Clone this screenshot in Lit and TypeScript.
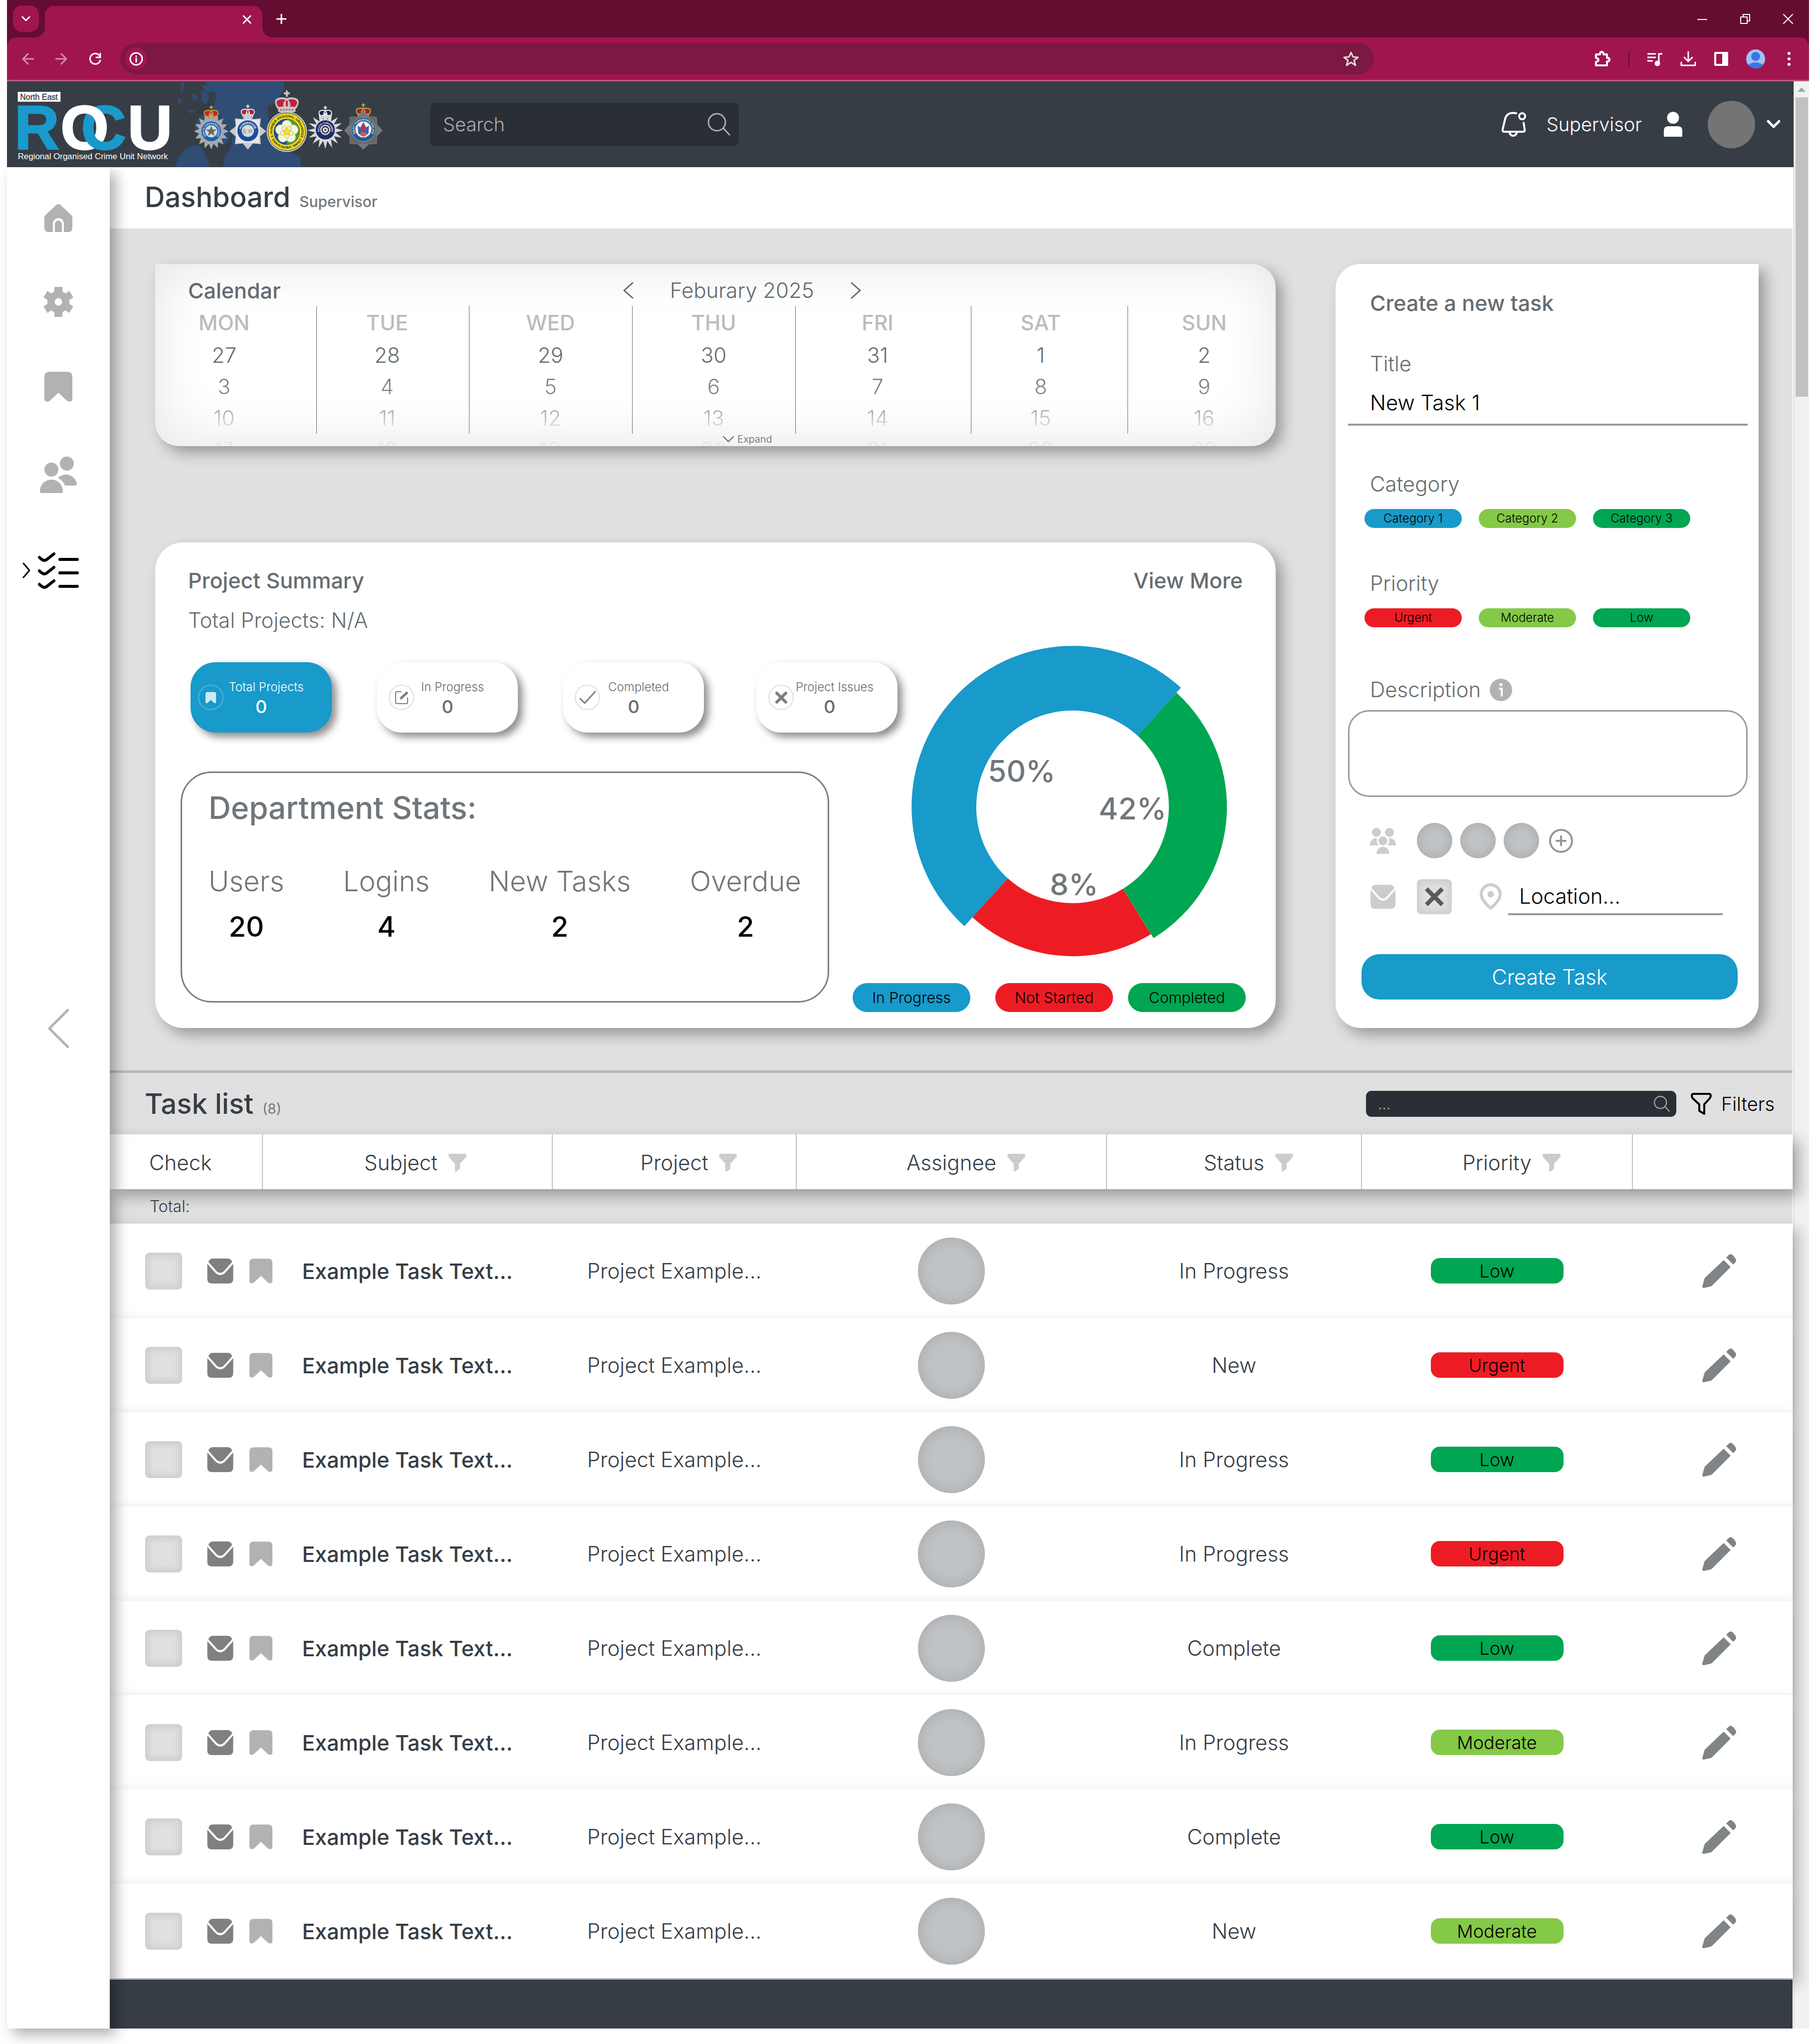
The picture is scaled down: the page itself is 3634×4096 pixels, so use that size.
import { LitElement, html, svg, css } from "lit";
import { customElement, property } from "lit/decorators.js";
import { classMap } from "lit/directives/class-map.js";

type Level = "Low" | "Moderate" | "Urgent";

interface Task {
  subject: string;
  project: string;
  status: string;
  priority: Level;
}

const TASKS: Task[] = (
  [
    ["In Progress", "Low"],
    ["New", "Urgent"],
    ["In Progress", "Low"],
    ["In Progress", "Urgent"],
    ["Complete", "Low"],
    ["In Progress", "Moderate"],
    ["Complete", "Low"],
    ["New", "Moderate"],
  ] as [string, Level][]
).map(([status, priority]) => ({
  subject: "Example Task Text...",
  project: "Project Example...",
  status,
  priority,
}));

const DAYS = ["MON", "TUE", "WED", "THU", "FRI", "SAT", "SUN"];
const WEEKS = [
  [27, 28, 29, 30, 31, 1, 2],
  [3, 4, 5, 6, 7, 8, 9],
  [10, 11, 12, 13, 14, 15, 16],
  [17, 18, 19, 20, 21, 22, 23],
];

const LEVEL_CLASS: Record<Level, string> = { Low: "green", Moderate: "lime", Urgent: "red" };

/* ---------- icons ---------- */

const stroke = (w: number, h: number, box: string, d: string, width: number, color = "currentColor") => html`
  <svg width=${w} height=${h} viewBox=${box} fill="none" stroke=${color} stroke-width=${width}
    stroke-linecap="round" stroke-linejoin="round" aria-hidden="true"><path d=${d} /></svg>`;

const fill = (w: number, h: number, box: string, d: string) => html`
  <svg width=${w} height=${h} viewBox=${box} fill="currentColor" fill-rule="evenodd" aria-hidden="true"><path d=${d} /></svg>`;

const iconSearch = (size: number) =>
  stroke(size, size, "0 0 48 48", "M20 3a17 17 0 1 0 0 34a17 17 0 1 0 0-34M33 32L45 45", 3);

const iconBookmark = (w: number, h: number) =>
  fill(w, h, "0 0 56 60", "M10 0H46Q56 0 56 10V54Q56 60 50 60Q47 60 44 57L28 42L12 57Q9 60 6 60Q0 60 0 54V10Q0 0 10 0Z");

const iconMail = (w: number, h: number) =>
  fill(
    w,
    h,
    "0 0 54 52",
    "M3 5Q6 0 12 0H42Q48 0 51 5Q52 7 51 8L34 27Q27 33 20 27L3 8Q2 7 3 5ZM0 11L17 30Q27 39 37 30L54 11V42Q54 52 44 52H10Q0 52 0 42Z"
  );

const iconHome = fill(
  56,
  56,
  "0 0 56 56",
  "M24 1.500Q28 -1.500 32 1.500L56 24V48Q56 56 48 56H39V39A11 11 0 0 0 17 39V56H8Q0 56 0 48V24ZM21 56V40A7 7 0 0 1 35 40V56Z"
);

const iconGear = fill(
  60,
  60,
  "0 0 60 60",
  "M22 0H38V9L44 13L52 8L60 21L52 26V34L60 39L52 52L44 47L38 51V60H22V51L16 47L8 52L0 39L8 34V26L0 21L8 8L16 13L22 9ZM30 22.500A7.500 7.500 0 1 0 30 37.500A7.500 7.500 0 1 0 30 22.500Z"
);

const iconPeople = html`
  <svg width="74" height="74" viewBox="0 0 74 74" fill="currentColor" aria-hidden="true">
    <circle cx="23" cy="26" r="14" /><circle cx="54" cy="14" r="14" />
    <path d="M0 70V69A23 23 0 0 1 46 69V70Q46 73 43 73H3Q0 73 0 70Z" />
    <path d="M36 43A22 22 0 0 1 74 55Q74 58 71 58H50Q46 47 36 43Z" />
  </svg>`;

const iconTasks = html`
  <svg width="82" height="88" viewBox="0 0 82 88" fill="none" stroke="#000" stroke-width="6"
    stroke-linecap="round" stroke-linejoin="round" aria-hidden="true">
    <path d="M3 18Q8 23 12 24Q16 24 18 22L32 11M3 45Q8 50 12 51Q16 51 18 49L32 38M3 72Q8 77 12 78Q16 78 18 76L32 65" />
    <path d="M44 22H79M44 49H79M44 76H79" />
  </svg>`;

const iconFunnel = fill(
  36,
  36,
  "0 0 36 36",
  "M3 0H33Q36 0 36 3Q36 6 34 8L23 20V29Q23 30 22 31L15 36Q13 36 13 34V20L2 8Q0 6 0 3Q0 0 3 0Z"
);

const iconPencil = fill(
  68,
  68,
  "0 0 68 68",
  "M48 7L53 2Q57 -2 62 3L66 8Q70 13 66 17L62 21ZM43 12L57 26L20 63Q19 64 17 65L3 68Q0 68 0 65L4 51Q4 50 5 48Z"
);

const iconGroup = html`
  <svg width="52" height="52" viewBox="0 0 52 52" fill="currentColor" aria-hidden="true">
    <circle cx="13" cy="9" r="9" /><circle cx="39" cy="9" r="9" /><circle cx="26" cy="26" r="9" />
    <path d="M0 35A14 14 0 0 1 14 20Q12 29 17 35ZM52 35A14 14 0 0 0 38 20Q40 29 35 35Z" />
    <path d="M13 52A13 14 0 0 1 39 52Z" />
  </svg>`;

const iconPin = html`
  <svg width="44" height="54" viewBox="0 0 44 54" fill="none" stroke="currentColor" stroke-width="6" aria-hidden="true">
    <path d="M22 3A19 19 0 0 1 41 22Q41 34 22 50Q3 34 3 22A19 19 0 0 1 22 3Z" stroke-linejoin="round" />
    <circle cx="22" cy="22" r="6.500" fill="currentColor" stroke="none" />
  </svg>`;

/* ---------- crests ---------- */

const burst = (cx: number, cy: number, outer: number, inner: number, n: number, stretch = 1) =>
  Array.from({ length: n * 2 }, (_, i) => {
    const a = (Math.PI * i) / n - Math.PI / 2;
    const r = i % 2 ? inner : outer;
    return `${(cx + r * Math.cos(a)).toFixed(1)},${(cy + r * stretch * Math.sin(a)).toFixed(1)}`;
  }).join(" ");

const crown = (cx: number, top: number, scale: number, metal: string, velvet: string) => svg`
  <g transform="translate(${cx} ${top}) scale(${scale})">
    <path d="M-2 0H2V4H6V8H2V13H-2V8H-6V4H-2Z" fill=${metal} />
    <path d="M-19 38Q-29 24 -21 17Q-12 12 0 16Q12 12 21 17Q29 24 19 38Z" fill=${metal} />
    <path d="M-17 34Q-25 24 -18 20Q-10 16 -3 20Q-9 26 -7 33ZM17 34Q25 24 18 20Q10 16 3 20Q9 26 7 33Z" fill=${velvet} />
    <path d="M-2 21H2V33H-2Z" fill=${velvet} />
    <path d="M-18 36H18V44Q0 48 -18 44Z" fill=${metal} />
    <path d="M-14 40H14" stroke=${velvet} stroke-width="2" stroke-dasharray="3 3" />
  </g>`;

@customElement("rocu-logo")
export class RocuLogo extends LitElement {
  static styles = css`
    :host { display: block; flex: none; }
    svg { display: block; font-family: "Liberation Sans", Arial, sans-serif; }
    .letter { font-size: 132px; font-weight: 700; }
    .ring { font-weight: 700; }
  `;

  private ringText(id: string, cx: number, cy: number, r: number, size: number, color: string, text: string) {
    return svg`
      <path id=${id} fill="none" d="M${cx} ${cy + r}A${r} ${r} 0 1 1 ${cx + 0.1} ${cy + r}" />
      <text class="ring" font-size=${size} fill=${color} text-anchor="middle">
        <textPath href="#${id}" startOffset="50%">${text}</textPath>
      </text>`;
  }

  render() {
    return html`
      <svg width="767" height="172" viewBox="15 174 815 182" role="img" aria-label="North East ROCU">
        <clipPath id="lower"><rect x="150" y="272" width="200" height="60" /></clipPath>
        <g fill="#2f4d75">
          <path d="M436 174H606L604 192L588 218L570 228L573 262L585 300L612 322L640 334L641 356H475L479 334L492 314L496 290L482 262L462 240L456 222L462 202L448 188Z" />
          <path d="M373 356L378 340L392 320L412 308L428 312L440 334L447 356Z" />
          <path d="M414 270L424 250L446 240L474 252L492 290L480 310L458 304L446 292L430 298L420 284Z" />
          <path d="M386 176L393 174L390 190L384 196ZM378 212L384 208L388 218L380 222ZM408 204L416 200L422 210L414 216ZM428 196L438 192L446 204L440 222L430 218ZM428 182L444 180L456 196L444 198ZM404 234L416 236L410 242L402 240ZM456 222L474 218L466 234L448 244Z" />
        </g>
        <rect x="38" y="196" width="91" height="21" fill="#fff" />
        <text x="83" y="213" font-size="17" text-anchor="middle" fill="#363d45" stroke="#363d45" stroke-width="0.400">North East</text>
        <g stroke-width="3">
          <text class="letter" x="31" y="318" fill="#189acb" stroke="#189acb">R</text>
          <text class="letter" x="173" y="318" fill="#189acb" stroke="#189acb">C</text>
          <text class="letter" x="129" y="318" fill="#fff" stroke="#fff">O</text>
          <text class="letter" x="173" y="318" fill="#189acb" stroke="#189acb" clip-path="url(#lower)">C</text>
          <text class="letter" x="272" y="318" fill="#fff" stroke="#fff">U</text>
        </g>
        <text x="38" y="339" font-size="18" fill="#fff">Regional Organised Crime Unit Network</text>

        ${crown(450, 225, 0.65, "#c79a2c", "#c8202c")}
        <polygon points=${burst(450, 280, 37, 26, 16, 1.05)} fill="#a7a9ac" />
        <circle cx="450" cy="280" r="21" fill="#1c63ae" /><circle cx="450" cy="280" r="13" fill="#d5d8d6" />
        <polygon points=${burst(450, 280, 12, 5, 5)} fill="#5f6d66" />
        ${this.ringText("r1", 450, 280, 15, 5, "#dfe9f5", "NORTH YORKSHIRE POLICE")}

        ${crown(528, 223, 0.62, "#d8dadc", "#b32035")}
        <polygon points=${burst(528, 280, 39, 28, 8)} fill="#c9cbcd" />
        <rect x="503" y="255" width="50" height="50" fill="#e4e5e6" />
        <circle cx="528" cy="279" r="23" fill="#1d4c9f" stroke="#fff" /><circle cx="528" cy="279" r="13" fill="#d9dadb" />
        <text x="528" y="284" font-size="12" text-anchor="middle" fill="#76797c">E R</text>
        ${this.ringText("r2", 528, 279, 15, 6, "#fff", "· HUMBERSIDE ·")}

        ${crown(611, 193, 1.03, "#c3c5c7", "#c81f3a")}
        <circle cx="611" cy="281" r="43" fill="#c9cbcd" /><circle cx="611" cy="281" r="40" fill="#f6df1d" stroke="#222" />
        <circle cx="611" cy="281" r="28" fill="#1f4f9b" /><path d="M611 253A28 28 0 0 1 611 309Z" fill="#4f9a35" />
        ${[0, 72, 144, 216, 288].map(
          (a) => svg`<circle cx="611" cy="267" r="10.500" fill="#f7f6de" stroke="#d7cf7d" transform="rotate(${a} 611 281)" />`
        )}
        ${[36, 108, 180, 252, 324].map(
          (a) => svg`<circle cx="611" cy="272" r="5" fill="#f2efb4" stroke="#b9bd5c" transform="rotate(${a} 611 281)" />`
        )}
        <circle cx="611" cy="281" r="6" fill="#f3e22a" stroke="#cda927" />
        ${this.ringText("r3", 611, 281, 31, 7, "#1a1a1a", "YORKSHIRE & HUMBER REGIONAL ORGANISED CRIME UNIT")}

        ${crown(693, 226, 0.58, "#f3f3f3", "#1d2440")}
        <polygon points=${burst(693, 278, 38, 22, 16, 1.05)} fill="#d8dadc" />
        <circle cx="693" cy="277" r="21" fill="#232a6b" stroke="#eee" /><circle cx="693" cy="277" r="11" fill="#d8dadc" />
        <circle cx="693" cy="277" r="7" fill="none" stroke="#333" stroke-width="2.500" /><circle cx="693" cy="277" r="2" fill="#333" />
        ${this.ringText("r4", 693, 277, 13, 5, "#fff", "SOUTH YORKSHIRE")}

        ${crown(774, 220, 0.66, "#b9a046", "#8f2738")}
        <polygon points=${burst(774, 278, 41, 32, 8)} fill="#77777a" />
        <rect x="746" y="250" width="56" height="56" fill="#66676b" />
        <circle cx="774" cy="276" r="26" fill="#235a99" stroke="#c8b15e" /><circle cx="774" cy="276" r="17" fill="#f1f1f1" />
        <path d="M762 268L768 272L774 260L780 272L786 268L785 284L778 290H770L763 284Z" fill="#4b5ca4" />
        <path d="M768 282H780V288L774 292L768 288Z" fill="#e2572e" /><circle cx="774" cy="272" r="5" fill="#c8324a" />
        ${this.ringText("r5", 774, 276, 19, 6, "#e9e2c4", "WEST YORKSHIRE POLICE")}
      </svg>`;
  }
}

@customElement("status-donut")
export class StatusDonut extends LitElement {
  static styles = css`
    :host { display: block; }
    svg { display: block; }
    text { font: 500 60px Inter, "Liberation Sans", sans-serif; fill: #70767a; text-anchor: middle; }
  `;
  render() {
    return html`
      <svg width="646" height="646" viewBox="-323 -323 646 646" role="img" aria-label="Project status share">
        <path fill="#ed1c24" d="M157 255A299 299 0 0 1 -201 221L-130 143A193 193 0 0 0 101 164Z" />
        <path fill="#00a651" d="M208 -229A309 309 0 0 1 162 263L101 164A193 193 0 0 0 130 -143Z" />
        <path fill="#189acb" d="M-217 239A320 320 0 0 1 217 -239L130 -143A190 190 0 0 0 -130 143Z" />
        <text x="-102" y="-50">50%</text>
        <text x="120" y="25">42%</text>
        <text x="3" y="177">8%</text>
      </svg>`;
  }
}

@customElement("browser-bar")
export class BrowserBar extends LitElement {
  static styles = css`
    :host { display: block; background: #650d31; color: #fff; }
    svg { display: block; }
    button { border: 0; padding: 0; background: none; color: inherit; display: grid; place-items: center; }
    .tabs { display: flex; align-items: center; height: 75px; }
    .menu { width: 52px; height: 53px; margin-left: 12px; border-radius: 18px; background: #a0154e; }
    .tab { position: relative; display: flex; justify-content: flex-end; align-items: center; align-self: flex-end; width: 436px; height: 63px; box-sizing: border-box; padding: 0 22px 10px 0; margin-left: 12px; border-radius: 18px 18px 0 0; background: #a0154e; }
    .tab::before, .tab::after { content: ""; position: absolute; bottom: 0; width: 20px; height: 20px; }
    .tab::before { left: -20px; background: radial-gradient(circle at 0 0, transparent 20px, #a0154e 20px); }
    .tab::after { right: -20px; background: radial-gradient(circle at 100% 0, transparent 20px, #a0154e 20px); }
    .plus { margin-left: 28px; }
    .win { margin-left: auto; display: flex; gap: 66px; padding-right: 32px; }
    .bar { display: flex; align-items: center; height: 88px; box-sizing: border-box; background: #a0154e; border-bottom: 3px solid #bd5780; border-radius: 18px 18px 0 0; padding: 0 36px 0 30px; }
    .nav { display: flex; gap: 43px; align-items: center; }
    .dim { color: #d48dab; }
    .url { flex: 1; display: flex; align-items: center; justify-content: space-between; height: 63px; box-sizing: border-box; margin: 0 441px 0 37px; padding: 0 30px 0 9px; border-radius: 32px; background: #7c1842; }
    .site { width: 45px; height: 45px; border-radius: 50%; background: #a0154e; }
    .tools { display: flex; align-items: center; gap: 35px; }
    .tools .more { margin-left: 9px; }
    .sep { width: 2px; height: 30px; background: #5c1033; }
  `;
  render() {
    return html`
      <div class="tabs">
        <button class="menu" aria-label="Search tabs">${stroke(18, 12, "0 0 18 12", "M2 2L9 9L16 2", 3)}</button>
        <div class="tab"><button aria-label="Close tab">${stroke(18, 18, "0 0 18 18", "M2 2L16 16M16 2L2 16", 3)}</button></div>
        <button class="plus" aria-label="New tab">${stroke(20, 20, "0 0 20 20", "M10 1V19M1 10H19", 3)}</button>
        <div class="win">
          <button aria-label="Minimise">${stroke(20, 20, "0 0 20 20", "M1 11H19", 2)}</button>
          <button aria-label="Restore">${stroke(20, 20, "0 0 20 20", "M1 6H14V19H1ZM6 5V1H19V14H15", 2)}</button>
          <button aria-label="Close">${stroke(20, 20, "0 0 20 20", "M1 1L19 19M19 1L1 19", 2)}</button>
        </div>
      </div>
      <div class="bar">
        <div class="nav">
          <button class="dim" aria-label="Back">${stroke(24, 24, "0 0 24 24", "M23 12H2M12 2L2 12L12 22", 3)}</button>
          <button class="dim" aria-label="Forward">${stroke(24, 24, "0 0 24 24", "M1 12H22M12 2L22 12L12 22", 3)}</button>
          <button aria-label="Reload">${stroke(26, 26, "0 0 26 26", "M23 16A10.500 10.500 0 1 1 21 6L23 9M23 2V10H15", 3)}</button>
        </div>
        <div class="url">
          <button class="site" aria-label="Site information">${stroke(28, 28, "0 0 28 28", "M14 2a12 12 0 1 0 0 24a12 12 0 1 0 0-24M14 13V20M14 8.500V9", 3)}</button>
          <button aria-label="Bookmark this tab">${stroke(32, 32, "0 0 32 32", "M16 3L20 12L30 13L22 19L25 29L16 23L7 29L10 19L2 13L12 12Z", 3, "#d9dfd6")}</button>
        </div>
        <div class="tools">
          <button aria-label="Extensions">${stroke(34, 34, "0 0 34 34", "M4 8H12V7Q12 3 15.500 3Q19 3 19 7V8H26V15H27Q31 15 31 18.500Q31 22 27 22H26V30H4V23Q9 22 9 19Q9 16 4 15Z", 4)}</button>
          <span class="sep"></span>
          <button aria-label="Media">
            <svg width="32" height="32" viewBox="0 0 32 32" fill="none" stroke="currentColor" stroke-width="3"><path d="M1 6H18M1 13H18M1 20H12M24 25V6H31" /><circle cx="21" cy="25" r="4" fill="currentColor" /></svg>
          </button>
          <button aria-label="Downloads">${stroke(32, 32, "0 0 32 32", "M16 2V20M8 13L16 21L24 13M2 23V29H30V23", 3)}</button>
          <button aria-label="Side panel">
            <svg width="30" height="30" viewBox="0 0 30 30" fill="currentColor"><path fill-rule="evenodd" d="M3 1H27Q29 1 29 3V27Q29 29 27 29H3Q1 29 1 27V3Q1 1 3 1ZM5 5V25H17V5Z" /></svg>
          </button>
          <button aria-label="Profile">
            <svg width="38" height="38" viewBox="0 0 38 38"><clipPath id="c"><circle cx="19" cy="19" r="19" /></clipPath><g clip-path="url(#c)"><rect width="38" height="38" fill="#9cc2fb" /><circle cx="19" cy="14" r="9" fill="#3f73e0" /><ellipse cx="19" cy="35" rx="16" ry="9" fill="#3b78e7" /></g></svg>
          </button>
          <button class="more" aria-label="Menu">
            <svg width="8" height="30" viewBox="0 0 8 30" fill="currentColor"><circle cx="4" cy="4" r="3" /><circle cx="4" cy="15" r="3" /><circle cx="4" cy="26" r="3" /></svg>
          </button>
        </div>
      </div>`;
  }
}

@customElement("stat-card")
export class StatCard extends LitElement {
  @property() label = "";
  @property({ type: Number }) value = 0;
  @property() icon = "bookmark";
  @property({ type: Boolean }) active = false;

  static styles = css`
    :host { display: block; flex: none; width: 283px; }
    .card { display: flex; align-items: center; gap: 4px; box-sizing: border-box; width: 100%; height: 141px; padding: 0 58px 0 24px; border: 0; border-radius: 50px; background: #fff; color: #666d71; box-shadow: 9px 9px 16px rgba(0, 0, 0, 0.45); font: 300 24px/30px Inter, "Liberation Sans", sans-serif; }
    .active { background: #189acb; color: #fff; padding-left: 15px; padding-right: 50px; }
    .disc { flex: none; display: grid; place-items: center; box-sizing: border-box; width: 51px; height: 51px; border: 2px solid #dcdfe0; border-radius: 50%; color: #7b7f82; }
    .active .disc { border-color: #53b5da; color: #cfeaf5; }
    .text { flex: 1; display: flex; flex-direction: column; align-items: center; white-space: nowrap; padding-top: 6px; }
    .num { font-weight: 500; font-size: 36px; line-height: 48px; padding-right: 20px; }
    svg { display: block; }
  `;

  private glyph() {
    switch (this.icon) {
      case "edit":
        return html`<svg width="30" height="30" viewBox="0 0 30 30" fill="none" stroke="currentColor" stroke-width="2" stroke-linecap="round"><path d="M14 3H6Q3 3 3 6V24Q3 27 6 27H24Q27 27 27 24V15" /><path d="M12 18L13 14L25 3L28 6L16 17Z" fill="currentColor" stroke-width="1" /></svg>`;
      case "check":
        return stroke(34, 30, "0 0 34 30", "M2 17L11 26L32 3", 3);
      case "cross":
        return stroke(26, 26, "0 0 26 26", "M4 4L22 22M22 4L4 22", 6);
      default:
        return iconBookmark(21, 24);
    }
  }

  render() {
    return html`
      <button class=${classMap({ card: true, active: this.active })}>
        <span class="disc">${this.glyph()}</span>
        <span class="text"><span>${this.label}</span><span class="num">${this.value}</span></span>
      </button>`;
  }
}

@customElement("app-root")
export class AppRoot extends LitElement {
  static styles = css`
    :host { display: block; background: #fff; color: #363d45; font: 300 42px/50px Inter, "Liberation Sans", sans-serif; }
    svg { display: block; flex: none; }
    button { display: grid; place-items: center; padding: 0; border: 0; background: none; color: inherit; font: inherit; }
    input, textarea { font: inherit; box-sizing: border-box; border-radius: 0; outline: 0; resize: none; min-width: 0; }
    h1, h2, h3, p, dl, dd, dt { margin: 0; font-size: inherit; font-weight: inherit; }
    table { border-collapse: collapse; border-spacing: 0; table-layout: fixed; width: 100%; }
    th, td { padding: 0; font-weight: inherit; }

    .window { margin: 0 8px 31px 14px; }
    .view { display: grid; grid-template-columns: 1fr 31px; }
    .app { min-width: 0; position: relative; z-index: 1; }

    .top { display: flex; align-items: center; height: 172px; background: #363d45; color: #fff; position: relative; z-index: 3; }
    .find { display: flex; align-items: center; box-sizing: border-box; background: #2a2e35; color: #a9acaf; }
    .find input { flex: 1; border: 0; padding: 0; background: none; color: inherit; }
    .find input::placeholder { color: inherit; opacity: 1; }
    .find.main { width: 619px; height: 87px; margin-left: 81px; padding: 0 16px 0 26px; border-radius: 11px; font-size: 38px; }
    .user { display: flex; align-items: center; margin-left: auto; padding-right: 26px; font-size: 38px; }
    .user .name { margin: 0 44px 0 41px; }
    .face { width: 95px; height: 95px; margin: 0 23px 0 51px; border-radius: 50%; background: #747474; }

    .cols { display: grid; grid-template-columns: 206px 1fr; }
    .side { position: relative; z-index: 2; display: flex; flex-direction: column; align-items: center; gap: 110px; padding-top: 74px; background: #fff; color: #b2b2b2; box-shadow: 12px 12px 26px rgba(0, 0, 0, 0.32); }
    .side .current { position: relative; }
    .side .mark { position: absolute; right: 97px; }
    .side .collapse { margin-top: 725px; }
    .main-col { min-width: 0; padding-right: 2px; }

    .title { display: flex; align-items: baseline; gap: 18px; height: 123px; box-sizing: border-box; padding: 25px 0 0 70px; }
    .title h1, .task-bar h2 { font-size: 56px; line-height: 70px; font-weight: 500; }
    .title span, .task-bar .count { font-size: 30px; font-weight: 500; color: #75797c; }

    .grey { background: #e0e0e0; }
    .board { display: grid; grid-template-columns: minmax(0, 2246fr) minmax(0, 848fr); column-gap: 120px; padding: 71px 68px 85px 91px; color: #666d71; }
    .left { display: flex; flex-direction: column; gap: 193px; min-width: 0; }
    .card { box-shadow: 13px 13px 28px rgba(0, 0, 0, 0.32); background: #fff; }
    .strong { font-weight: 500; font-size: 43px; }

    .calendar { position: relative; height: 365px; border-radius: 0 48px 48px 48px; overflow: hidden; }
    .calendar::after { content: ""; position: absolute; inset: 0; border-radius: inherit; box-shadow: inset 0 0 110px rgba(0, 0, 0, 0.11); pointer-events: none; }
    .cal-head { display: grid; grid-template-columns: 5fr 7fr; align-items: center; height: 84px; box-sizing: border-box; padding-top: 22px; }
    .cal-head h2 { padding-left: 66px; }
    .month { display: flex; align-items: center; gap: 72px; }
    .calendar th, .calendar td { text-align: center; border-left: 1px solid #666d71; }
    .calendar tr > :first-child { border-left: 0; padding-right: 46px; }
    .calendar tr > :nth-child(2), .calendar tr > :nth-child(5) { padding-right: 22px; }
    .calendar tr > :nth-child(6) { padding-right: 34px; }
    .calendar tr > :last-child { padding-left: 10px; }
    .calendar th { height: 67px; font-weight: 500; color: #b9bcbd; }
    .calendar td { height: 63px; }
    .w1 span { color: transparent; background: linear-gradient(#6b7276, #8e9396); background-clip: text; }
    .w2 span { color: transparent; background: linear-gradient(#a9acae 20%, #e4e5e5 85%); background-clip: text; }
    .calendar .w3 td { border-color: transparent; color: #f3f3f3; }
    .expand { position: absolute; left: calc(50% + 14px); bottom: 2px; display: flex; align-items: center; gap: 6px; font-size: 20px; line-height: 24px; }
    .k1 { width: 323px; } .k2 { width: 306px; } .k3 { width: 327px; } .k5 { width: 352px; } .k6 { width: 314px; } .k7 { width: 297px; }

    .summary { box-sizing: border-box; padding: 51px 59px 32px 51px; border-radius: 56px; }
    .sum-head { display: flex; justify-content: space-between; padding: 0 7px 30px 15px; }
    .sum-body { display: grid; grid-template-columns: minmax(0, 1fr) 789px; column-gap: 47px; }
    .sum-left { min-width: 0; }
    .total { padding-left: 15px; }
    .stats { display: flex; gap: 90px; margin: 59px 0 78px 20px; }
    .stats .issues { margin-left: 15px; }
    .dept { height: 463px; box-sizing: border-box; padding: 35px 53px; border: 3px solid #777c80; border-radius: 62px; color: #70767a; }
    .dept h3 { font-size: 62px; line-height: 70px; font-weight: 500; }
    .dept dl { display: flex; justify-content: space-between; padding-top: 77px; font-size: 56px; line-height: 70px; text-align: center; }
    .dept dd { padding-top: 21px; color: #000; font-weight: 500; }
    .chart { padding-top: 76px; }
    .chart status-donut { margin-left: 118px; }
    .legend { display: flex; gap: 50px; padding-top: 30px; }
    .legend .pill:last-child { margin-left: -20px; }
    .pill { display: grid; place-items: center; color: #000; white-space: nowrap; }
    .legend .pill { width: 236px; height: 58px; border-radius: 29px; font-size: 30px; line-height: 36px; }
    .blue { background: #189acb; } .red { background: #ed1c24; } .green { background: #00a651; } .lime { background: #84c947; }

    .create { display: flex; flex-direction: column; box-sizing: border-box; padding: 53px 22px 57px 25px; border-radius: 50px 0 50px 50px; }
    .create h2, .create .lab { padding-left: 44px; }
    .create .lab { display: flex; align-items: center; gap: 18px; }
    .field-title { margin-top: 72px; }
    .text-in { width: 100%; height: 89px; margin-top: 10px; padding: 0 44px; border: 0; border-bottom: 4px solid #979b9f; background: none; color: #000; }
    .cat { margin-top: 92px; } .pri { margin-top: 86px; } .desc { margin-top: 100px; }
    .choices { display: flex; gap: 34px; padding: 25px 0 0 33px; }
    .choices .pill { width: 195px; height: 38px; border-radius: 19px; font-size: 24px; line-height: 28px; }
    .area { display: block; width: 100%; height: 174px; margin-top: 16px; padding: 20px 40px; border: 3px solid #979b9f; border-radius: 42px; background: none; }
    .who, .where { display: flex; align-items: center; color: #ccc; }
    .who { margin: 52px 0 40px; padding-left: 44px; }
    .who .av { width: 71px; height: 71px; margin-right: 16px; border-radius: 50%; }
    .who .av:first-of-type { margin-left: 42px; }
    .av { background: #bfc3c6; box-shadow: inset 0 0 16px 6px #b0b0b0; }
    .plus { margin-left: 4px; color: #969696; }
    .where { padding-left: 44px; }
    .where .loc { flex: 1; height: 74px; margin: 0 50px 0 13px; padding: 0 0 0 22px; border: 0; border-bottom: 4px solid #979b9f; background: none; color: #000; }
    .where .loc::placeholder { color: #000; opacity: 1; }
    .tick { flex: none; appearance: none; width: 74px; height: 74px; margin: 0; border-radius: 9px; background: #e0e0e0; box-shadow: inset 0 0 12px 8px #cfcfcf; display: grid; place-items: center; }
    .where .tick { width: 70px; height: 70px; margin: 0 56px 0 42px; }
    .tick:checked::before { content: ""; width: 38px; height: 38px; background: #5a5a5a; clip-path: polygon(0 16%, 16% 0, 50% 34%, 84% 0, 100% 16%, 66% 50%, 100% 84%, 84% 100%, 50% 66%, 16% 100%, 0 84%, 34% 50%); }
    .submit { height: 91px; margin: 78px 20px 0 27px; border-radius: 36px; background: #189acb; color: #fff; }

    .task-bar { display: flex; align-items: center; height: 128px; box-sizing: border-box; padding: 0 36px 0 70px; border-top: 5px solid #b8baba; }
    .heading { display: flex; align-items: baseline; gap: 18px; }
    .task-bar .count { font-weight: 400; font-size: 28px; }
    .find.small { width: 622px; height: 52px; margin: 0 28px 0 auto; padding: 0 12px 0 24px; border-radius: 11px; font-size: 30px; }
    .filters { display: flex; align-items: center; gap: 18px; color: #000; font-size: 38px; }

    .tasks tr { background: #fff; box-shadow: 12px 12px 26px rgba(0, 0, 0, 0.25); }
    .tasks thead tr { height: 110px; box-shadow: 13px 13px 28px rgba(0, 0, 0, 0.32); }
    .tasks thead th { border-right: 2px solid #bfc2c4; }
    .tasks thead th:last-child { border: 0; }
    .tasks .sum { background: none; box-shadow: none; font-size: 32px; }
    .tasks .sum td { height: 69px; padding-left: 80px; }
    .tasks .row td { height: 189px; text-align: center; }
    .c1 { width: 306px; } .c2 { width: 581px; } .c3 { width: 489px; } .c4 { width: 622px; } .c5 { width: 511px; } .c6 { width: 543px; } .c7 { width: 321px; }
    .th { display: flex; justify-content: center; align-items: center; gap: 22px; padding: 4px 0 0 58px; }
    .th button { color: #ccc; }
    .th.first { justify-content: flex-start; padding-left: 79px; }
    .th.subject { padding-left: 32px; }
    .marks { display: flex; align-items: center; padding-left: 71px; color: #b2b2b2; }
    .marks .mail { margin: 0 32px 0 50px; color: #808080; }
    .tasks .av { width: 134px; height: 134px; margin: 0 auto; border-radius: 50%; box-shadow: inset 0 0 22px 7px #b0b0b0; }
    .tasks .pill { width: 266px; height: 51px; margin: 0 auto; border-radius: 18px; font-size: 36px; line-height: 40px; }
    .edit { margin: 0 auto; padding-left: 26px; color: #7f8487; }
    .foot { height: 98px; margin-top: 3px; background: #363d45; }

    .scroll { display: flex; flex-direction: column; align-items: center; box-sizing: border-box; border-left: 1px solid #c4c4c4; background: #f1f1f1; }
    .scroll .up { height: 32px; color: #a3a3a3; }
    .thumb { width: 25px; height: 600px; background: #c1c1c1; }
  `;

  private funnelHead(text: string, extra = "") {
    return html`<th><div class="th ${extra}">${text}<button aria-label="Filter ${text}">${iconFunnel}</button></div></th>`;
  }

  private header() {
    return html`
      <header class="top">
        <rocu-logo></rocu-logo>
        <label class="find main"><input type="search" placeholder="Search" aria-label="Search" />${iconSearch(48)}</label>
        <div class="user">
          <button aria-label="Notifications">
            <svg width="50" height="50" viewBox="0 0 50 50" fill="none" stroke="currentColor" stroke-width="4" stroke-linecap="round" stroke-linejoin="round">
              <path d="M30 3Q10 -1 7 18L3 35Q2 40 6 40H44Q48 40 47 35L45 22" /><path d="M16 40Q18 48 24 48Q30 48 32 40" /><circle cx="42" cy="9" r="6" />
            </svg>
          </button>
          <span class="name">Supervisor</span>
          <svg width="37" height="50" viewBox="0 0 37 50" fill="currentColor"><circle cx="18.500" cy="12" r="12" /><path d="M0 50V38Q0 29 9 29H28Q37 29 37 38V50Z" /></svg>
          <span class="face"></span>
          <button aria-label="Account menu">${stroke(28, 18, "0 0 28 18", "M3 3L14 14L25 3", 5)}</button>
        </div>
      </header>`;
  }

  private sidebar() {
    return html`
      <nav class="side">
        <button aria-label="Home">${iconHome}</button>
        <button aria-label="Settings">${iconGear}</button>
        <button aria-label="Saved">${iconBookmark(56, 60)}</button>
        <button aria-label="Teams">${iconPeople}</button>
        <button class="current" aria-label="Tasks"><span class="mark">${stroke(16, 32, "0 0 16 32", "M2 2L14 16L2 30", 3, "#000")}</span>${iconTasks}</button>
        <button class="collapse" aria-label="Collapse">${stroke(42, 78, "0 0 42 78", "M40 2L3 39L40 76", 5)}</button>
      </nav>`;
  }

  private calendar() {
    return html`
      <section class="card calendar">
        <div class="cal-head">
          <h2 class="strong">Calendar</h2>
          <div class="month">
            <button aria-label="Previous month">${stroke(24, 34, "0 0 24 34", "M21 2L4 17L21 32", 3)}</button>
            <span>Feburary 2025</span>
            <button aria-label="Next month">${stroke(24, 34, "0 0 24 34", "M3 2L20 17L3 32", 3)}</button>
          </div>
        </div>
        <table>
          <colgroup><col class="k1" /><col class="k2" /><col class="k3" /><col class="k3" /><col class="k5" /><col class="k6" /><col class="k7" /></colgroup>
          <thead><tr>${DAYS.map((d) => html`<th scope="col">${d}</th>`)}</tr></thead>
          <tbody>${WEEKS.map((w, i) => html`<tr class="w${i}">${w.map((d) => html`<td><span>${d}</span></td>`)}</tr>`)}</tbody>
        </table>
        <button class="expand">${stroke(24, 12, "0 0 24 12", "M2 1L12 11L22 1", 2)}Expand</button>
      </section>`;
  }

  private summary() {
    return html`
      <section class="card summary">
        <div class="sum-head strong"><h2 class="strong">Project Summary</h2><button>View More</button></div>
        <div class="sum-body">
          <div class="sum-left">
            <p class="total">Total Projects: N/A</p>
            <div class="stats">
              <stat-card label="Total Projects" icon="bookmark" active></stat-card>
              <stat-card label="In Progress" icon="edit"></stat-card>
              <stat-card label="Completed" icon="check"></stat-card>
              <stat-card class="issues" label="Project Issues" icon="cross"></stat-card>
            </div>
            <div class="dept">
              <h3>Department Stats:</h3>
              <dl>
                ${[["Users", 20], ["Logins", 4], ["New Tasks", 2], ["Overdue", 2]].map(
                  ([k, v]) => html`<div><dt>${k}</dt><dd>${v}</dd></div>`
                )}
              </dl>
            </div>
          </div>
          <div class="chart">
            <status-donut></status-donut>
            <div class="legend">
              <span class="pill blue">In Progress</span><span class="pill red">Not Started</span><span class="pill green">Completed</span>
            </div>
          </div>
        </div>
      </section>`;
  }

  private createForm() {
    return html`
      <section class="card create">
        <h2 class="strong">Create a new task</h2>
        <label class="lab field-title" for="title">Title</label>
        <input class="text-in" id="title" type="text" value="New Task 1" />
        <h3 class="lab cat">Category</h3>
        <div class="choices">
          <button class="pill blue">Category 1</button><button class="pill lime">Category 2</button><button class="pill green">Category 3</button>
        </div>
        <h3 class="lab pri">Priority</h3>
        <div class="choices">
          <button class="pill red">Urgent</button><button class="pill lime">Moderate</button><button class="pill green">Low</button>
        </div>
        <label class="lab desc" for="desc">Description
          <svg width="45" height="45" viewBox="0 0 45 45"><circle cx="22.500" cy="22.500" r="22.500" fill="#b2b2b2" /><circle cx="22.500" cy="12" r="3" fill="#fff" /><path d="M20 20H24V34" fill="none" stroke="#fff" stroke-width="4" stroke-linecap="round" stroke-linejoin="round" /></svg>
        </label>
        <textarea class="area" id="desc"></textarea>
        <div class="who">
          ${iconGroup}
          <span class="av"></span><span class="av"></span><span class="av"></span>
          <button class="plus" aria-label="Add person">${stroke(48, 48, "0 0 48 48", "M24 2a22 22 0 1 0 0 44a22 22 0 1 0 0-44M24 15V33M15 24H33", 4)}</button>
        </div>
        <div class="where">
          ${iconMail(52, 48)}
          <input class="tick" type="checkbox" checked aria-label="Notify by email" />
          ${iconPin}
          <input class="loc" type="text" placeholder="Location..." aria-label="Location" />
        </div>
        <button class="submit">Create Task</button>
      </section>`;
  }

  private tasks() {
    return html`
      <section class="grey">
        <div class="task-bar">
          <div class="heading"><h2>Task list</h2><span class="count">(8)</span></div>
          <label class="find small"><input type="search" placeholder="..." aria-label="Search tasks" />${iconSearch(34)}</label>
          <button class="filters">
            ${stroke(44, 46, "0 0 44 46", "M6 3H38Q41 3 41 7Q41 9 39 12L28 24V43L18 37V24L5 12Q3 9 3 7Q3 3 6 3Z", 4)}<span>Filters</span>
          </button>
        </div>
        <table class="tasks">
          <colgroup><col class="c1" /><col class="c2" /><col class="c3" /><col class="c4" /><col class="c5" /><col class="c6" /><col class="c7" /></colgroup>
          <thead>
            <tr>
              <th><div class="th first">Check</div></th>
              ${this.funnelHead("Subject", "subject")}${this.funnelHead("Project")}${this.funnelHead("Assignee")}${this.funnelHead("Status")}${this.funnelHead("Priority")}
              <th></th>
            </tr>
          </thead>
          <tbody>
            <tr class="sum"><td colspan="7">Total:</td></tr>
            ${TASKS.map(
              (t, i) => html`
                <tr class="row">
                  <td>
                    <div class="marks">
                      <input class="tick" type="checkbox" aria-label="Select task ${i + 1}" />
                      <button class="mail" aria-label="Message">${iconMail(53, 50)}</button>
                      <button aria-label="Save">${iconBookmark(46, 50)}</button>
                    </div>
                  </td>
                  <td class="strong">${t.subject}</td>
                  <td>${t.project}</td>
                  <td><div class="av"></div></td>
                  <td>${t.status}</td>
                  <td><span class="pill ${LEVEL_CLASS[t.priority]}">${t.priority}</span></td>
                  <td><button class="edit" aria-label="Edit task ${i + 1}">${iconPencil}</button></td>
                </tr>`
            )}
          </tbody>
        </table>
        <footer class="foot"></footer>
      </section>`;
  }

  render() {
    return html`
      <div class="window">
        <browser-bar></browser-bar>
        <div class="view">
          <div class="app">
            ${this.header()}
            <div class="cols">
              ${this.sidebar()}
              <main class="main-col">
                <div class="title"><h1>Dashboard</h1><span>Supervisor</span></div>
                <div class="board grey">
                  <div class="left">${this.calendar()}${this.summary()}</div>
                  ${this.createForm()}
                </div>
                ${this.tasks()}
              </main>
            </div>
          </div>
          <div class="scroll" aria-hidden="true">
            <span class="up">${fill(16, 32, "0 0 16 32", "M8 12L16 21H0Z")}</span>
            <span class="thumb"></span>
          </div>
        </div>
      </div>`;
  }
}
